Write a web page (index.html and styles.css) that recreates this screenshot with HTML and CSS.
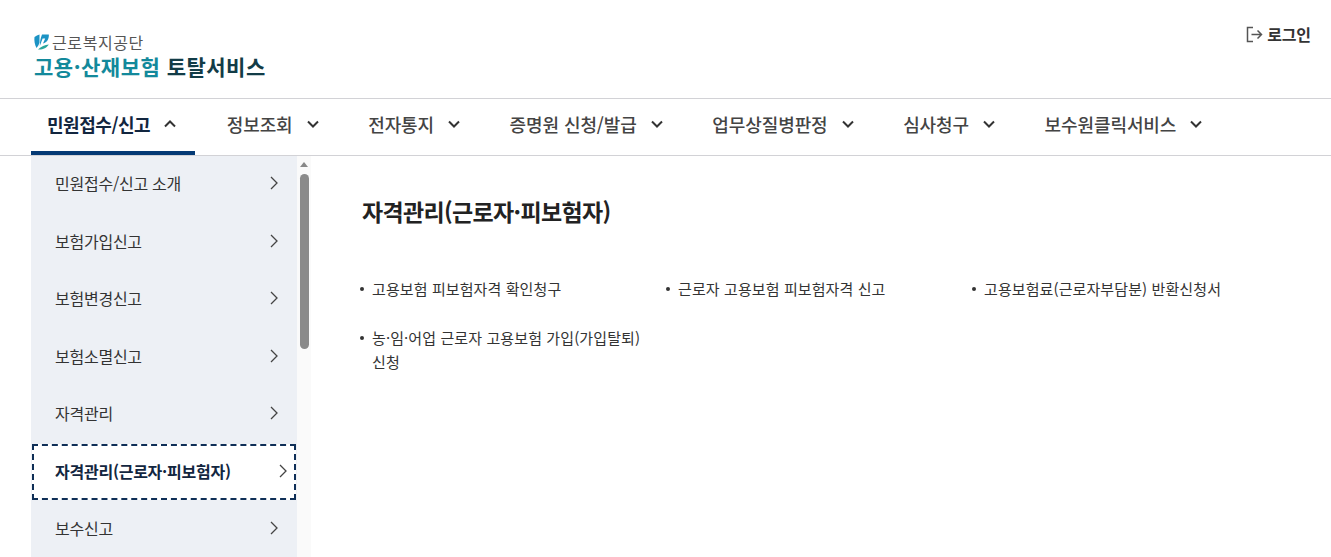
FILE: index.html
```html
<!DOCTYPE html>
<html lang="ko">
<head>
    <meta charset="UTF-8">
    <title>고용·산재보험 토탈서비스</title>
    <link rel="stylesheet" href="styles.css">
</head>
<body>
    <header class="top">
        <div class="logo">
            <div class="logo-org">
                <svg class="logo-mark" width="15" height="16" viewBox="0 0 15 16">
                    <path d="M0.5 3 C2 1.8 3.8 1 5.5 0.5 L5.5 8.5 C5 10.5 3.8 12.5 2.5 14 C0.8 11 0 6.5 0.5 3 Z" fill="#1b93c4"/>
                    <path d="M8 0.5 L14.8 0.5 C15.2 4.5 13.5 8.5 9 9.5 L11.2 4.5 L8.6 4.5 L5.8 12 C5.8 8 6.6 4 8 0.5 Z" fill="#1b93c4"/>
                    <path d="M4 15.5 C7 12.5 11 10.8 14.8 10.5 C13 14 8 16 4 15.5 Z" fill="#2aa79b"/>
                </svg>
                <span>근로복지공단</span>
            </div>
            <div class="logo-title"><em>고용·산재보험</em> 토탈서비스</div>
        </div>
        <a class="login" href="#">
            <svg width="17" height="17" viewBox="0 0 17 17" fill="none" stroke="#555" stroke-width="1.5">
                <path d="M7 1.5 H1.5 V15.5 H7"/>
                <path d="M5.5 8.5 H15.5 M11.5 4.5 L15.5 8.5 L11.5 12.5"/>
            </svg>
            <span>로그인</span>
        </a>
    </header>

    <nav class="gnb">
        <a class="gnb-item active" href="#">민원접수/신고 <svg class="caret" viewBox="0 0 12 8"><path d="M1 6.5 L6 1.5 L11 6.5"/></svg></a>
        <a class="gnb-item" href="#">정보조회 <svg class="caret" viewBox="0 0 12 8"><path d="M1 1.5 L6 6.5 L11 1.5"/></svg></a>
        <a class="gnb-item" href="#">전자통지 <svg class="caret" viewBox="0 0 12 8"><path d="M1 1.5 L6 6.5 L11 1.5"/></svg></a>
        <a class="gnb-item" href="#">증명원 신청/발급 <svg class="caret" viewBox="0 0 12 8"><path d="M1 1.5 L6 6.5 L11 1.5"/></svg></a>
        <a class="gnb-item" href="#">업무상질병판정 <svg class="caret" viewBox="0 0 12 8"><path d="M1 1.5 L6 6.5 L11 1.5"/></svg></a>
        <a class="gnb-item" href="#">심사청구 <svg class="caret" viewBox="0 0 12 8"><path d="M1 1.5 L6 6.5 L11 1.5"/></svg></a>
        <a class="gnb-item" href="#">보수원클릭서비스 <svg class="caret" viewBox="0 0 12 8"><path d="M1 1.5 L6 6.5 L11 1.5"/></svg></a>
    </nav>

    <div class="body-wrap">
        <aside class="side">
            <ul class="side-list">
                <li class="side-item"><span>민원접수/신고 소개</span><svg class="chev" viewBox="0 0 8 14"><path d="M1 1 L7 7 L1 13"/></svg></li>
                <li class="side-item"><span>보험가입신고</span><svg class="chev" viewBox="0 0 8 14"><path d="M1 1 L7 7 L1 13"/></svg></li>
                <li class="side-item"><span>보험변경신고</span><svg class="chev" viewBox="0 0 8 14"><path d="M1 1 L7 7 L1 13"/></svg></li>
                <li class="side-item"><span>보험소멸신고</span><svg class="chev" viewBox="0 0 8 14"><path d="M1 1 L7 7 L1 13"/></svg></li>
                <li class="side-item"><span>자격관리</span><svg class="chev" viewBox="0 0 8 14"><path d="M1 1 L7 7 L1 13"/></svg></li>
                <li class="side-item current"><span>자격관리(근로자·피보험자)</span><svg class="chev" viewBox="0 0 8 14"><path d="M1 1 L7 7 L1 13"/></svg></li>
                <li class="side-item"><span>보수신고</span><svg class="chev" viewBox="0 0 8 14"><path d="M1 1 L7 7 L1 13"/></svg></li>
            </ul>
            <div class="scrollbar">
                <div class="scroll-arrow"></div>
                <div class="scroll-thumb"></div>
            </div>
        </aside>

        <main class="content">
            <h2 class="content-title">자격관리(근로자·피보험자)</h2>
            <ul class="link-grid">
                <li>고용보험 피보험자격 확인청구</li>
                <li>근로자 고용보험 피보험자격 신고</li>
                <li>고용보험료(근로자부담분) 반환신청서</li>
                <li>농·임·어업 근로자 고용보험 가입(가입탈퇴) 신청</li>
            </ul>
        </main>
    </div>
</body>
</html>
```

FILE: styles.css
```css
* {
    box-sizing: border-box;
}
html, body {
    height: 557px;
    overflow: hidden;
}
body {
    margin: 0;
    background-color: white;
    color: #222;
    font-family: "Noto Sans CJK KR", "Noto Sans", sans-serif;
}
a {
    color: inherit;
    text-decoration: none;
}
ul {
    margin: 0;
    padding: 0;
    list-style: none;
}
.top {
    height: 99px;
    padding: 24px 20px 0 34px;
    display: flex;
    justify-content: space-between;
    align-items: flex-start;
    border-bottom: 1px solid #d2d2d6;
}
.logo {
    padding-top: 8px;
}
.logo-org {
    display: flex;
    align-items: center;
    gap: 3px;
    height: 20px;
    font-size: 16px;
    line-height: 20px;
    letter-spacing: 0.6px;
    color: #555;
}
.logo-mark {
    flex: none;
}
.logo-title {
    font-size: 21px;
    line-height: 28px;
    font-weight: 700;
    letter-spacing: 0.5px;
    color: #123c47;
}
.logo-title em {
    font-style: normal;
    color: #13899b;
}
.login {
    display: flex;
    align-items: center;
    gap: 4px;
    height: 20px;
    font-size: 16px;
    font-weight: 700;
    letter-spacing: -0.1px;
    color: #333;
}
.gnb {
    height: 57px;
    padding-left: 31px;
    display: flex;
    border-bottom: 1px solid #d2d2d6;
}
.gnb-item {
    height: 56px;
    padding: 0 18px 6px 16px;
    margin-right: 15.6px;
    display: flex;
    align-items: center;
    gap: 14px;
    font-size: 18px;
    font-weight: 500;
    letter-spacing: -0.1px;
    color: #444;
}
.gnb-item.active {
    margin-right: 16px;
    font-weight: 700;
    letter-spacing: -0.45px;
    color: #12263f;
    border-bottom: 4px solid #043a75;
    padding-bottom: 2px;
    padding-right: 18.5px;
}
.caret {
    width: 12px;
    height: 8px;
    fill: none;
    stroke: #333;
    stroke-width: 2;
}
.body-wrap {
    padding-left: 31px;
    display: flex;
}
.side {
    width: 280px;
    height: 401px;
    display: flex;
    flex: none;
}
.side-list {
    width: 266px;
    background-color: #edf0f5;
}
.side-item {
    height: 57.5px;
    padding: 0 19px 3.5px 24px;
    display: flex;
    justify-content: space-between;
    align-items: center;
    font-size: 16px;
    letter-spacing: -0.25px;
    color: #333;
}
.side-item.current {
    height: 56px;
    margin: 0 1px 1.5px;
    padding: 0 7px 2px 21px;
    background-color: white;
    border: 2px dashed #0f2f57;
    font-weight: 700;
    color: #12263f;
}
.chev {
    width: 8px;
    height: 14px;
    fill: none;
    stroke: #444;
    stroke-width: 1.3;
}
.scrollbar {
    width: 14px;
    background-color: #fafafa;
    display: flex;
    flex-direction: column;
    align-items: center;
}
.scroll-arrow {
    margin-top: 6px;
    width: 0;
    height: 0;
    border-left: 4px solid transparent;
    border-right: 4px solid transparent;
    border-bottom: 5px solid #888;
}
.scroll-thumb {
    margin-top: 7px;
    width: 9px;
    height: 175px;
    border-radius: 5px;
    background-color: #8a8a8a;
}
.content {
    flex: 1;
    padding: 0 51px;
}
.content-title {
    margin: 37px 0 0;
    font-size: 23px;
    line-height: 36px;
    font-weight: 700;
    letter-spacing: -0.65px;
    color: #222;
}
.link-grid {
    margin-top: 48px;
    margin-left: -2px;
    display: grid;
    grid-template-columns: repeat(3, 306px);
    row-gap: 25px;
}
.link-grid li {
    position: relative;
    width: 290px;
    padding-left: 12px;
    font-size: 15px;
    line-height: 24px;
    letter-spacing: 0.1px;
    color: #333;
}
.link-grid li::before {
    content: "";
    position: absolute;
    left: 0;
    top: 10px;
    width: 4px;
    height: 4px;
    border-radius: 50%;
    background-color: #333;
}
```
